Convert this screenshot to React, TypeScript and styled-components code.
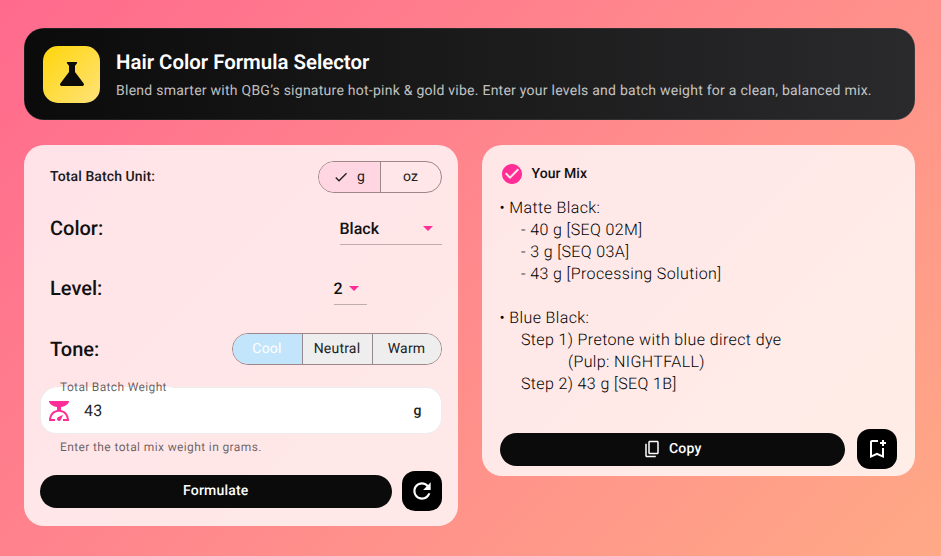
import React from "react";
import styled, { createGlobalStyle } from "styled-components";

const Global = createGlobalStyle`
  html, body { margin: 0; padding: 0; height: 100%; }
  body { font-family: Roboto, "Liberation Sans", sans-serif; color: #111; text-rendering: geometricPrecision; }
  button, pre { text-rendering: geometricPrecision; }
  * { box-sizing: border-box; }
`;

const Page = styled.div`
  width: 941px;
  height: 556px;
  overflow: hidden;
  padding: 28px 26px 0 24px;
  background: linear-gradient(135deg, #ff6a8d 0%, #ff8a8c 50%, #ffa986 100%);
`;

const Header = styled.header`
  height: 92px;
  border-radius: 20px;
  padding: 0 19px;
  display: flex;
  align-items: center;
  gap: 16px;
  background: linear-gradient(90deg, #0b0b0b 0%, #2a2a2c 100%);
  box-shadow: 0 0 0 0.5px rgba(255, 255, 255, 0.15) inset;
`;

const LogoTile = styled.div`
  width: 57px;
  height: 57px;
  border-radius: 15px;
  display: flex;
  align-items: center;
  justify-content: center;
  background: linear-gradient(135deg, #ffd60a 0%, #ffe27a 100%);
`;

const HeaderText = styled.div`
  display: flex;
  flex-direction: column;
  gap: 7px;
  margin-top: -1px;
`;

const Title = styled.h1`
  margin: 0;
  font-size: 20.4px;
  line-height: 28px;
  font-weight: 600;
  color: #fff;
  letter-spacing: 0;
`;

const Subtitle = styled.p`
  margin: 0;
  font-size: 14px;
  line-height: 16px;
  color: rgba(255, 255, 255, 0.74);
  letter-spacing: 0.25px;
`;

const Columns = styled.div`
  display: flex;
  align-items: flex-start;
  gap: 24px;
  margin-top: 25px;
`;

const Card = styled.section<{ $h: number }>`
  flex: 0 0 calc((100% - 24px) / 2);
  min-width: 0;
  height: ${(p) => p.$h}px;
  border-radius: 20px;
  background: rgba(255, 255, 255, 0.8);
  display: flex;
  flex-direction: column;
`;

const FormCard = styled(Card)`
  padding: 16px 16px 0 16px;
`;

const Row = styled.div<{ $h: number; $mt?: number }>`
  flex: none;
  height: ${(p) => p.$h}px;
  margin-top: ${(p) => p.$mt ?? 0}px;
  padding-left: 10px;
  display: flex;
  align-items: center;
  justify-content: space-between;
`;

const SmallLabel = styled.span`
  font-size: 14px;
  font-weight: 500;
  letter-spacing: 0.1px;
  color: #1a1a1a;
  margin-top: -1px;
`;

const BigLabel = styled.span`
  font-size: 20px;
  font-weight: 500;
  color: #111;
  margin-top: -1px;
`;

const Toggle = styled.div<{ $w: number }>`
  width: ${(p) => p.$w}px;
  height: 32px;
  border-radius: 16px;
  border: 1px solid rgba(60, 40, 45, 0.5);
  display: flex;
  overflow: hidden;
`;

const ToggleItem = styled.div<{ $w: number; $bg?: string; $color?: string }>`
  width: ${(p) => p.$w}px;
  flex: none;
  display: flex;
  align-items: center;
  justify-content: center;
  gap: 8px;
  font-size: 14px;
  letter-spacing: 0.2px;
  color: ${(p) => p.$color ?? "#222"};
  background: ${(p) => p.$bg ?? "transparent"};
  & + & { border-left: 1px solid rgba(60, 40, 45, 0.5); }
`;

const Select = styled.div<{ $w: number; $mr: number }>`
  width: ${(p) => p.$w}px;
  height: 33px;
  margin-right: ${(p) => p.$mr}px;
  border-bottom: 1px solid rgba(0, 0, 0, 0.25);
  display: flex;
  align-items: center;
  font-size: 16px;
  font-weight: 500;
  color: #111;
`;

const Caret = styled.i<{ $ml: number }>`
  width: 0;
  height: 0;
  margin-left: ${(p) => p.$ml}px;
  margin-top: 1px;
  border-left: 5.5px solid transparent;
  border-right: 5.5px solid transparent;
  border-top: 5px solid #ff2d95;
`;

const Field = styled.div`
  flex: none;
  position: relative;
  height: 47px;
  margin-top: 22px;
  border-radius: 16px;
  background: #fff;
  border: 1px solid rgba(0, 0, 0, 0.07);
  display: flex;
  align-items: center;
  padding-left: 6px;
  padding-right: 19px;
`;

const FieldLabel = styled.span`
  position: absolute;
  left: 14px;
  top: -8px;
  padding: 0 5px;
  height: 14px;
  font-size: 12px;
  line-height: 14px;
  letter-spacing: 0.35px;
  color: rgba(0, 0, 0, 0.62);
  background: linear-gradient(180deg, transparent 50%, #fff 50%);
`;

const FieldValue = styled.span`
  flex: 1;
  margin-left: 13px;
  font-size: 16px;
  letter-spacing: 0.3px;
  color: #222;
`;

const FieldUnit = styled.span`
  font-size: 14px;
  font-weight: 500;
  color: #222;
`;

const Helper = styled.div`
  flex: none;
  margin: 5px 0 0 20px;
  font-size: 12px;
  line-height: 16px;
  letter-spacing: 0.38px;
  color: rgba(0, 0, 0, 0.6);
`;

const ActionRow = styled.div<{ $mt: number; $gap: number }>`
  flex: none;
  display: flex;
  align-items: center;
  gap: ${(p) => p.$gap}px;
  margin-top: ${(p) => p.$mt}px;
`;

const PillButton = styled.button`
  flex: 1;
  height: 33px;
  border: 0;
  border-radius: 17px;
  background: #0b0b0b;
  color: #fff;
  font: 500 14px Roboto, sans-serif;
  letter-spacing: 0.2px;
  display: flex;
  align-items: center;
  justify-content: center;
  gap: 8px;
  padding: 0;
`;

const SquareButton = styled.button`
  width: 40px;
  height: 40px;
  flex: none;
  border: 0;
  padding: 0;
  border-radius: 13px;
  background: #000;
  display: flex;
  align-items: center;
  justify-content: center;
`;

const ResultCard = styled(Card)`
  padding: 17px 18px 0 18px;
`;

const ResultHead = styled.div`
  flex: none;
  height: 24px;
  display: flex;
  align-items: center;
  gap: 8px;
  font-size: 14px;
  font-weight: 500;
  letter-spacing: 0.05px;
  color: #111;
`;

const MixText = styled.pre`
  flex: none;
  margin: 11px 0 0;
  height: 232px;
  font: 300 16px/22px Roboto, sans-serif;
  letter-spacing: 0.38px;
  color: #000;
  white-space: pre-wrap;
`;

const Icon = ({ d, size, color }: { d: string; size: number; color: string }) => (
  <svg width={size} height={size} viewBox="0 0 24 24" fill={color} aria-hidden="true">
    <path d={d} />
  </svg>
);

const P = {
  science: "M19.8 18.4 14 10.67V6.5l1.35-1.69c.26-.33.03-.81-.39-.81H9.04c-.42 0-.65.48-.39.81L10 6.5v4.17L4.2 18.4c-.49.66-.02 1.6.8 1.6h14c.82 0 1.29-.94.8-1.6z",
  check: "M9 16.17 4.83 12l-1.42 1.41L9 19 21 7l-1.41-1.41z",
  scale: "M14 11V8c4.56-.58 8-3.1 8-6H2c0 2.9 3.44 5.42 8 6v3c-3.68.73-8 3.61-8 11h6v-2H4.13c.93-6.83 6.65-7.2 7.87-7.2s6.94.37 7.87 7.2H16v2h6c0-7.39-4.32-10.27-8-11zm-2 11c-1.1 0-2-.9-2-2 0-.55.22-1.05.59-1.41C11.39 17.79 16 16 16 16s-1.79 4.61-2.59 5.41c-.36.37-.86.59-1.41.59z",
  refresh: "M17.65 6.35C16.2 4.9 14.21 4 12 4c-4.42 0-7.99 3.58-7.99 8s3.57 8 7.99 8c3.73 0 6.84-2.55 7.73-6h-2.08c-.82 2.33-3.04 4-5.65 4-3.31 0-6-2.69-6-6s2.69-6 6-6c1.66 0 3.14.69 4.22 1.78L13 11h7V4l-2.35 2.35z",
  circle: "M12 2C6.48 2 2 6.48 2 12s4.48 10 10 10 10-4.48 10-10S17.52 2 12 2zm-2 15-5-5 1.41-1.41L10 14.17l7.59-7.59L19 8l-9 9z",
  copy: "M5 5H3v16c0 1.1.9 2 2 2h12v-2H5V5zM19 1H9c-1.1 0-2 .9-2 2v14c0 1.1.9 2 2 2h10c1.1 0 2-.9 2-2V3c0-1.1-.9-2-2-2zm0 16H9V3h10v14z",
  bookmark: "M17 11v6.97l-5-2.14-5 2.14V5h6V3H7c-1.1 0-2 .9-2 2v16l7-3 7 3V11h-2zm4-4h-2v2h-2V7h-2V5h2V3h2v2h2v2z",
};

const mix = `• Matte Black:
     - 40 g [SEQ 02M]
     - 3 g [SEQ 03A]
     - 43 g [Processing Solution]

• Blue Black:
     Step 1) Pretone with blue direct dye
                (Pulp: NIGHTFALL)
     Step 2) 43 g [SEQ 1B]`;

export default function App() {
  return (
    <Page>
      <Global />
      <Header>
        <LogoTile>
          <Icon d={P.science} size={36} color="#0b0b0b" />
        </LogoTile>
        <HeaderText>
          <Title>Hair Color Formula Selector</Title>
          <Subtitle>Blend smarter with QBG’s signature hot-pink &amp; gold vibe. Enter your levels and batch weight for a clean, balanced mix.</Subtitle>
        </HeaderText>
      </Header>
      <Columns>
        <FormCard $h={381}>
          <Row $h={32}>
            <SmallLabel>Total Batch Unit:</SmallLabel>
            <Toggle $w={124}>
              <ToggleItem $w={61} $bg="#ffd6e2">
                <Icon d={P.check} size={16} color="#222" />g
              </ToggleItem>
              <ToggleItem $w={61}>oz</ToggleItem>
            </Toggle>
          </Row>
          <Row $h={33} $mt={19}>
            <BigLabel>Color:</BigLabel>
            <Select $w={102} $mr={0}>
              Black
              <Caret $ml={44} />
            </Select>
          </Row>
          <Row $h={33} $mt={27}>
            <BigLabel>Level:</BigLabel>
            <Select $w={33} $mr={75}>
              2
              <Caret $ml={6} />
            </Select>
          </Row>
          <Row $h={32} $mt={28}>
            <BigLabel>Tone:</BigLabel>
            <Toggle $w={210}>
              <ToggleItem $w={69} $bg="#c3e5fb" $color="#fff">Cool</ToggleItem>
              <ToggleItem $w={70} $bg="#eeeeee">Neutral</ToggleItem>
              <ToggleItem $w={69} $bg="#eeeeee">Warm</ToggleItem>
            </Toggle>
          </Row>
          <Field>
            <FieldLabel>Total Batch Weight</FieldLabel>
            <Icon d={P.scale} size={24} color="#ff2d95" />
            <FieldValue>43</FieldValue>
            <FieldUnit>g</FieldUnit>
          </Field>
          <Helper>Enter the total mix weight in grams.</Helper>
          <ActionRow $mt={16} $gap={10}>
            <PillButton>Formulate</PillButton>
            <SquareButton>
              <Icon d={P.refresh} size={26} color="#fff" />
            </SquareButton>
          </ActionRow>
        </FormCard>
        <ResultCard $h={331}>
          <ResultHead>
            <Icon d={P.circle} size={24} color="#ff2d95" />
            Your Mix
          </ResultHead>
          <MixText>{mix}</MixText>
          <ActionRow $mt={0} $gap={12}>
            <PillButton>
              <Icon d={P.copy} size={18} color="#fff" />
              Copy
            </PillButton>
            <SquareButton>
              <Icon d={P.bookmark} size={24} color="#fff" />
            </SquareButton>
          </ActionRow>
        </ResultCard>
      </Columns>
    </Page>
  );
}
